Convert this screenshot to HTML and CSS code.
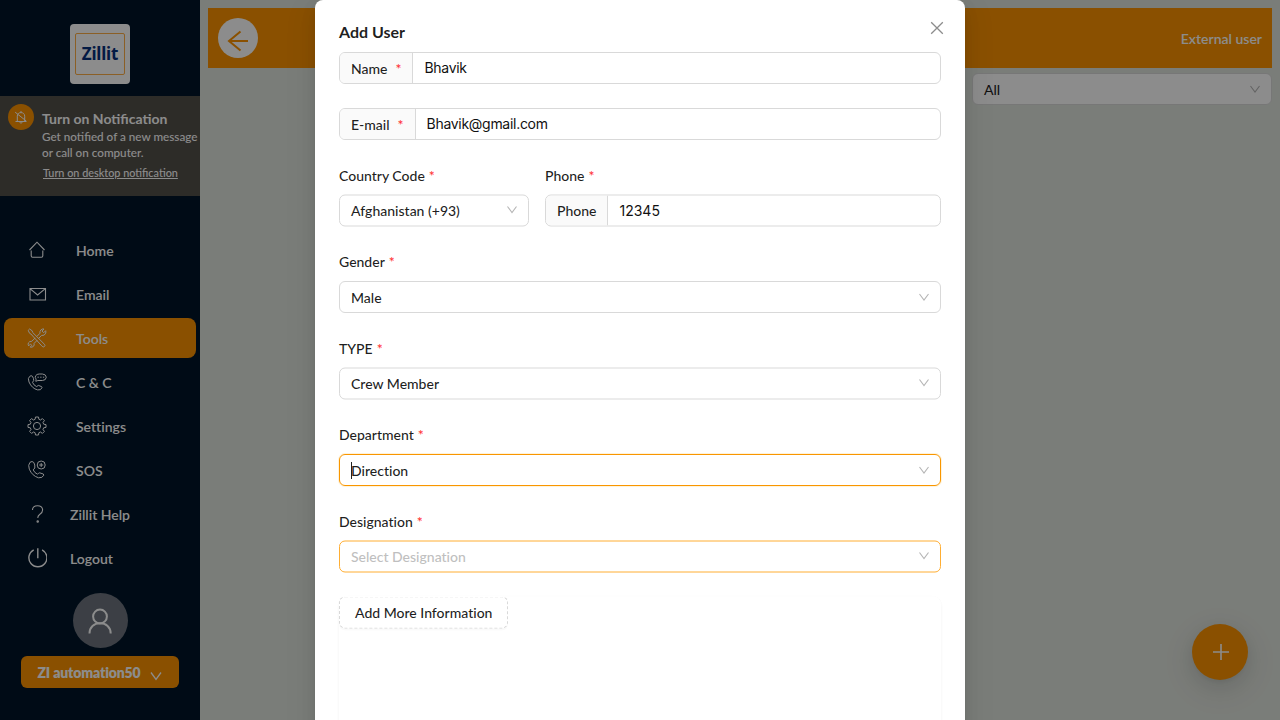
FILE: index.html
```html
<!DOCTYPE html>
<html lang="en">
<head>
<meta charset="utf-8">
<title>Add User</title>
<link rel="stylesheet" href="styles.css">
</head>
<body>
<div class="app">
  <aside class="sidebar">
    <div class="brand"><div class="logo"><div class="logo-frame">Zillit</div></div></div>
    <section class="notice">
      <span class="bell"><svg width="14" height="14" viewBox="0 0 14 14"><path d="M1.5 11.5h10.8M3.3 11.2V6.2C3.3 3.9 4.8 2.6 7 2.6s3.700 1.300 3.700 3.600v5M7 2.400V1M5.800 12.200c.2 1.200 2.200 1.200 2.400 0M1.200 2.200l11.200 9"/></svg></span>
      <div class="notice-body">
        <h3>Turn on Notification</h3>
        <p>Get notified of a new message<br>or call on computer.</p>
        <a>Turn on desktop notification</a>
      </div>
    </section>
    <nav class="menu">
      <a class="item"><svg viewBox="0 0 20 20"><path d="M2.500 10 10 2.200 17.500 10M4.200 10.500v5.300q0 1.400 1.400 1.400h8.800q1.400 0 1.400-1.400v-5.300"/></svg><span>Home</span></a>
      <a class="item"><svg viewBox="0 0 20 20"><path d="M3 4.500h15.500v11.500H3zM3.300 4.800l7.300 6.200L18 4.800"/></svg><span>Email</span></a>
      <a class="item active"><svg viewBox="0 0 20 20" class="fine"><path d="M1.200 2.400 2.600 1l2.600 1.800.5 1.700 11.800 11.800q1 1.200-.1 2.200t-2.200-.1L3.900 6 2.600 5.300zM8.200 9.900l-3.400 3.400q-2.400-.3-3.400 1.600-.6 1.500.2 3l1.800-1.800 1.500 1.300-1.700 1.700q1.700.6 3.300-.8 1-1.200.6-2.900L10.200 12.300M11.800 10.200l2.700-2.700q3.200.4 4.200-2.300.4-1.200 0-2.500l-2 2-1.700-1.600 2-2.100q-1.600-.4-3.100.9-1.400 1.500-.9 3.300L10 8.300"/></svg><span>Tools</span></a>
      <a class="item"><svg viewBox="0 0 20 20" class="fine"><path d="M2.800 4.300Q.4 6 2 10q2.800 6.400 8.600 7.900 3.500.6 4.400-2.200l-.4-1.100-3.300-1.200-1.700 1.200q-3-1.300-4.100-4.300l1.200-1.700q.2-2.400-1.400-4.400-1.100-1.100-2.500.1zM8.800 9.300l.3-2.200Q7.700 5.500 8.600 3.800 9.800 2 12.200 2h3.200q3.500.2 3.900 3.200-.3 3.200-3.900 3.300h-4.500zM10.500 5.200h1.300M13.200 5.200h1.300M15.900 5.200h1.300"/></svg><span>C &amp; C</span></a>
      <a class="item"><svg viewBox="0 0 20 20" class="fine"><path d="m8.500 1-.4 2.300-1.600.7-2-1.400-1.900 2 1.400 1.900-.7 1.700L1 8.600v2.800l2.300.4.7 1.700-1.400 1.900 2 2 1.900-1.400 1.600.7.400 2.300h3l.4-2.300 1.600-.7 1.900 1.400 2-2-1.400-1.900.7-1.700 2.300-.4V8.600l-2.300-.4-.7-1.700 1.400-1.900-2-2-1.900 1.400-1.600-.7-.4-2.300z"/><circle cx="10" cy="10" r="3.600"/></svg><span>Settings</span></a>
      <a class="item"><svg viewBox="0 0 20 20" class="fine"><path d="M3 2.300Q.7 5 2.300 9.200q3 6.800 9.300 8.600 3.900.4 5.200-2.600l-.5-1.200-3.700-1.200q-1 .1-2 1.400-3.100-1.200-4.400-4.300L7.800 8q.4-3.200-1-5.500Q5.200.6 3 2.300z"/><circle cx="14.200" cy="5" r="4"/><path d="M12.200 5h4M14.200 3v4"/></svg><span>SOS</span></a>
      <a class="item short"><svg viewBox="0 0 20 20"><path d="M5.500 6q0-4.200 5-4.200T15.600 6q0 2.500-2.700 4.200-2 1.300-2.200 3.700"/><circle cx="10.700" cy="17.500" r=".7"/></svg><span>Zillit Help</span></a>
      <a class="item short"><svg viewBox="0 0 20 20" class="power"><path d="M10.800.2v10M6.700 1.800a9 9 0 1 0 8.400 0"/></svg><span>Logout</span></a>
    </nav>
    <div class="profile">
      <div class="avatar"><svg width="28" height="28" viewBox="0 0 28 28"><circle cx="14" cy="8.500" r="6.900"/><path d="M3.500 25.500C3.500 18.900 8 15.300 14 15.300s10.700 3.600 10.700 10.200"/></svg></div>
      <button class="account">ZI automation50<svg width="14" height="12" viewBox="0 0 14 12"><path d="m2 2.500 5 7 5-7"/></svg></button>
    </div>
  </aside>
  <main class="content">
    <header class="topbar">
      <span class="back"><svg width="24" height="24" viewBox="0 0 24 24"><path d="M22 13H3M14.500 3.500 3 13l11.500 9.500"/></svg></span>
      <span class="page-name">External user</span>
    </header>
    <div class="filter"><span>All</span><svg class="chev" viewBox="0 0 12 12"><path d="m1.500 2 4.500 6 4.500-6"/></svg></div>
  </main>
  <button class="fab"><svg width="16" height="16" viewBox="0 0 16 16"><path d="M8 0v16M0 8h16"/></svg></button>
</div>
<div class="mask">
  <div class="modal" role="dialog">
    <svg class="close" viewBox="0 0 14 14"><path d="m1.200 1.200 11.600 11.600M12.800 1.200 1.200 12.800"/></svg>
    <h2>Add User</h2>
    <div class="group"><label>Name<i class="wide">*</i></label><div class="value">Bhavik</div></div>
    <div class="group"><label>E-mail<i class="wide">*</i></label><div class="value">Bhavik@gmail.com</div></div>
    <div class="pair">
      <div class="field half"><label>Country Code<i>*</i></label><div class="select"><span>Afghanistan (+93)</span><svg class="chev" viewBox="0 0 12 12"><path d="m1.500 2 4.500 6 4.500-6"/></svg></div></div>
      <div class="field half"><label>Phone<i>*</i></label><div class="group last"><label>Phone</label><div class="value digits">12345</div></div></div>
    </div>
    <div class="field"><label>Gender<i>*</i></label><div class="select"><span>Male</span><svg class="chev" viewBox="0 0 12 12"><path d="m1.500 2 4.500 6 4.500-6"/></svg></div></div>
    <div class="field half"><label>TYPE<i>*</i></label><div class="select"><span>Crew Member</span><svg class="chev" viewBox="0 0 12 12"><path d="m1.500 2 4.500 6 4.500-6"/></svg></div></div>
    <div class="field"><label>Department<i>*</i></label><div class="select focused"><b class="caret"></b><span>Direction</span><svg class="chev" viewBox="0 0 12 12"><path d="m1.500 2 4.500 6 4.500-6"/></svg></div></div>
    <div class="field half"><label>Designation<i>*</i></label><div class="select hovered"><span class="placeholder">Select Designation</span><svg class="chev" viewBox="0 0 12 12"><path d="m1.500 2 4.500 6 4.500-6"/></svg></div></div>
    <div class="more"><button class="dashed">Add More Information</button></div>
  </div>
</div>
</body>
</html>
```

FILE: styles.css
```css
* { box-sizing: border-box; }
body { margin: 0; height: 720px; overflow: hidden; font: 500 14px/22px Lato, sans-serif; color: rgba(0,0,0,.88); }
svg { fill: none; stroke: currentColor; flex: none; }
button { font: inherit; border: 0; }
.app { display: flex; height: 720px; background: #dfe3dc; }
.sidebar { width: 200px; background: #001529; color: #fff; display: flex; flex-direction: column; }
.brand { height: 96px; padding: 24px 70px 12px; }
.logo { width: 60px; height: 60px; border-radius: 4px; background: #fff; padding: 9px 5px; }
.logo-frame { height: 42px; border: 1px solid #fdae45; border-radius: 2px; color: #07307d; font: 700 17px/40px "Noto Sans", sans-serif; letter-spacing: -.2px; text-align: center; }
.notice { height: 100px; background: #53504a; display: flex; padding: 8px 0 0 8px; gap: 8px; }
.bell { width: 26px; height: 26px; border-radius: 50%; background: #fb9300; display: grid; place-items: center; flex: none; }
.notice-body { width: 158px; white-space: nowrap; }
.notice h3 { margin: 5px 0 0; font: 700 14px/20px Lato, sans-serif; }
.notice p { margin: -1px 0 0; font-size: 11.7px; line-height: 16px; }
.notice a { display: block; margin: 5px 0 0 1px; font-size: 10.85px; line-height: 16px; text-decoration: underline; }
.menu { margin: 34px 4px 0; display: grid; gap: 4px; font-variant-ligatures: none; }
.item { height: 40px; border-radius: 8px; padding-left: 23px; display: flex; align-items: center; gap: 29px; }
.item.short { gap: 23px; }
.item span { padding-top: 2px; font-weight: 600; }
.item svg { width: 20px; height: 20px; stroke-width: 1.1; }
.item svg.fine { stroke-width: 1; }
.item svg.power { stroke-width: 1.4; }
.active { background: #fb9300; }
.profile { display: flex; flex-direction: column; align-items: center; gap: 8px; margin-top: 15px; }
.avatar { width: 55px; height: 55px; border-radius: 50%; background: #6d747e; display: grid; place-items: center; }
.avatar svg { stroke-width: 2; margin-top: 2px; }
.account { width: 158px; height: 32px; border-radius: 6px; background: #fb9300; color: #fff; font-weight: 800; font-variant-ligatures: none; letter-spacing: -.15px; display: flex; align-items: center; justify-content: center; gap: 8px; padding: 1px 0 0; }
.account svg { margin-top: 6px; stroke-width: 1.3; }
.content { flex: 1; padding: 8px; }
.topbar { height: 60px; background: #fb9300; color: #fff; display: flex; align-items: center; justify-content: space-between; padding: 0 10px; font-weight: 600; }
.page-name { padding-top: 2px; }
.back { width: 40px; height: 40px; border-radius: 50%; background: #fff; color: #fb9300; display: grid; place-items: center; }
.back svg { stroke-width: 2; margin-top: 3px; }
.filter { width: 300px; height: 32px; margin: 5px 0 0 auto; border-radius: 6px; border: 1px solid #d9d9d9; background: #fff; display: flex; align-items: center; justify-content: space-between; padding: 2px 10px 0 11px; }
.chev { width: 12px; height: 12px; color: #b5b5b5; stroke-width: 1.1; }
.fab { position: absolute; left: 1192px; top: 624px; width: 56px; height: 56px; border-radius: 50%; background: #fb9300; color: #fff; padding: 0; display: grid; place-items: center; box-shadow: 0 6px 16px rgba(0,0,0,.08), 0 3px 6px -4px rgba(0,0,0,.12), 0 9px 28px 8px rgba(0,0,0,.05); }
.fab svg { stroke-width: 1.6; margin-left: 1px; }
.mask { position: absolute; inset: 0; background: rgba(0,0,0,.45); overflow: hidden; }
.modal { position: relative; width: 650px; height: 820px; margin: 0 auto; background: #fff; border-radius: 8px; padding: 20px 24px; font-variant-ligatures: none; box-shadow: 0 6px 16px rgba(0,0,0,.08), 0 3px 6px -4px rgba(0,0,0,.12), 0 9px 28px 8px rgba(0,0,0,.05); }
.close { position: absolute; right: 21px; top: 21px; width: 14px; height: 14px; color: #8c8c8c; stroke-width: 1.3; }
.modal h2 { margin: 0 0 8px; font: 700 16px/24px Lato, sans-serif; }
.group { display: flex; height: 32px; margin-bottom: 24px; border: 1px solid #d9d9d9; border-radius: 6px; }
.group > label { display: flex; align-items: center; padding: 2px 11px 0; background: #fafafa; border-right: 1px solid #d9d9d9; border-radius: 5px 0 0 5px; }
.value { flex: 1; padding: 4px 11px; font: 400 14px/22px Inter, sans-serif; letter-spacing: -.29px; color: #111; }
.value.digits { letter-spacing: 0; }
.group.last { margin: 0; }
.group.last > label { padding: 0 11px 1px; }
.field { margin-bottom: 24px; }
.field > label { display: block; height: 30px; line-height: 22px; }
.half > label { height: 31px; line-height: 24px; }
.half > .select, .half > .group { transform: translateY(-.5px); }
i { font-style: normal; color: #ff2b2e; margin-left: 4px; }
i.wide { margin-left: 8px; }
.pair { display: grid; grid-template-columns: 190px 396px; gap: 16px; }
.select { position: relative; height: 32px; border: 1px solid #d9d9d9; border-radius: 6px; padding: 1px 10px 0 11px; display: flex; align-items: center; justify-content: space-between; }
.half > .select { padding-top: 0; }
.half > .select span { padding-bottom: 1px; }
.focused { border-color: #f99600; box-shadow: 0 0 0 1px #fff3da; }
.hovered { border-color: #ffae33; }
.placeholder { color: #bfbfbf; }
.caret { position: absolute; left: 11px; top: 7px; width: 1px; height: 17px; background: #222; }
.more { height: 200px; border-radius: 8px; transform: translateY(-.5px); box-shadow: 0 1px 2px rgba(0,0,0,.03), 0 1px 6px -1px rgba(0,0,0,.02), 0 2px 4px rgba(0,0,0,.02); }
.dashed { display: block; width: 169px; white-space: nowrap; height: 32px; padding: 0 0 0 15px; text-align: left; border: 1px dashed #d9d9d9; border-radius: 6px; background: #fff; color: inherit; box-shadow: 0 2px 0 rgba(0,0,0,.02); }
```
